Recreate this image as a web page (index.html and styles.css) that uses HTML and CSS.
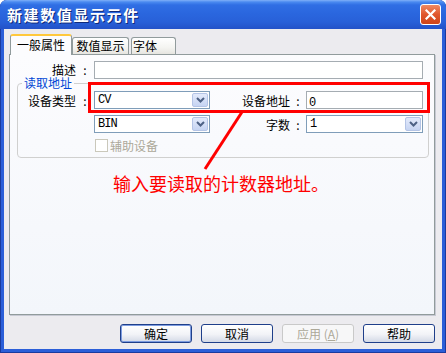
FILE: index.html
```html
<!DOCTYPE html>
<html lang="zh-CN">
<head>
  <meta charset="UTF-8" />
  <title>新建数值显示元件</title>
  <link rel="stylesheet" href="styles.css">
</head>
<body>

  <div class="window">

    <!-- Title bar -->
    <div class="titlebar">
      <span class="title">新建数值显示元件</span>
      <span class="close-btn">
        <svg width="11" height="11" viewBox="0 0 11 11">
          <path d="M1.5 1.5 L9.5 9.5 M9.5 1.5 L1.5 9.5" stroke="#fff" stroke-width="2.2" stroke-linecap="square"/>
        </svg>
      </span>
    </div>

    <div class="client">

      <!-- Tabs -->
      <div class="tabs">
        <span class="tab active">一般属性</span>
        <span class="tab tab-value">数值显示</span>
        <span class="tab tab-font">字体</span>
      </div>

      <div class="panel">
        <div class="field">
          <span class="lbl">描述</span>
          <span class="colon">:</span>
          <div class="edit"></div>
        </div>

        <fieldset class="group">
          <legend>读取地址</legend>
          <div class="grid">
            <span class="lbl">设备类型</span>
            <span class="colon">:</span>
            <div class="combo">
              <span class="val">CV</span>
              <span class="drop"><svg width="9" height="6" viewBox="0 0 9 6"><path d="M1 1 L4.5 4.5 L8 1" fill="none" stroke="#4d6185" stroke-width="2"/></svg></span>
            </div>
            <span class="lbl">设备地址</span>
            <span class="colon">:</span>
            <div class="edit"><span class="val">0</span></div>

            <span></span>
            <span></span>
            <div class="combo">
              <span class="val">BIN</span>
              <span class="drop"><svg width="9" height="6" viewBox="0 0 9 6"><path d="M1 1 L4.5 4.5 L8 1" fill="none" stroke="#4d6185" stroke-width="2"/></svg></span>
            </div>
            <span class="lbl">字数</span>
            <span class="colon">:</span>
            <div class="combo">
              <span class="val">1</span>
              <span class="drop"><svg width="9" height="6" viewBox="0 0 9 6"><path d="M1 1 L4.5 4.5 L8 1" fill="none" stroke="#4d6185" stroke-width="2"/></svg></span>
            </div>

            <span></span>
            <span></span>
            <label class="check"><span class="box"></span>辅助设备</label>
          </div>
        </fieldset>

        <p class="note">输入要读取的计数器地址。</p>

        <!-- annotation -->
        <div class="mark"></div>
        <svg class="pointer" width="424" height="259">
          <line x1="232" y1="57" x2="195" y2="114" stroke="#f00" stroke-width="3"/>
        </svg>
      </div>

      <!-- Buttons -->
      <div class="buttons">
        <span class="btn default">确定</span>
        <span class="btn">取消</span>
        <span class="btn disabled">应用 (<u>A</u>)</span>
        <span class="btn">帮助</span>
      </div>
    </div>
  </div>

</body>
</html>
```

FILE: styles.css
```css
* {
  box-sizing: border-box;
}

body {
  margin: 0;
  background: #fff;
  font-family: "Noto Sans CJK SC", "Noto Sans", sans-serif;
  font-size: 12px;
  color: #000;
}

.window {
  width: 446px;
  height: 353px;
  display: flex;
  flex-direction: column;
  background: #2b5ed8;
  border-radius: 7px 7px 0 0;
  overflow: hidden;
  box-shadow: inset 1px 0 #1a3a9e, inset -1px 0 #1a3a9e, inset 0 -1px #1a3a9e;
}

.titlebar {
  height: 29px;
  flex: none;
  display: flex;
  align-items: center;
  justify-content: space-between;
  padding: 0 5px 0 7px;
  background: linear-gradient(#80b0f8 0, #4a8af0 2px, #2f6ee4 5px, #2a66de 14px, #2860d8 22px, #2352c8 29px);
}

.title {
  color: #fff;
  font-weight: bold;
  font-size: 15px;
  letter-spacing: 1.6px;
  text-shadow: 1px 1px #0f2a7a;
}

.close-btn {
  width: 21px;
  height: 21px;
  border: 1px solid #fff;
  border-radius: 3px;
  background: linear-gradient(#f08a64, #e0562c 50%, #cf4418);
  display: flex;
  align-items: center;
  justify-content: center;
}

.client {
  flex: 1;
  margin: 0 4px 4px;
  background: #ecebef;
  padding: 5px 7px 6px 5px;
  display: flex;
  flex-direction: column;
}

/* tabs */
.tabs {
  display: flex;
  align-items: flex-end;
  height: 20px;
  padding-left: 1px;
}

.tab {
  height: 17px;
  border: 1px solid #919b9c;
  border-bottom: none;
  border-radius: 3px 3px 0 0;
  background: linear-gradient(#fff, #f4f4f1 60%, #e6e5e0);
  text-align: center;
  line-height: 16px;
}

.tab.active {
  width: 62px;
  height: 21px;
  margin-bottom: -1px;
  border-top: 2px solid #ffc83c;
  background: #fcfcfe;
  line-height: 18px;
  position: relative;
  z-index: 1;
}

.tab-value {
  width: 57px;
}

.tab-font {
  width: 45px;
  margin-left: 2px;
  text-align: left;
  padding-left: 1px;
}

.panel {
  position: relative;
  flex: none;
  height: 261px;
  border: 1px solid #919b9c;
  background: linear-gradient(#fcfcfe, #f3f6fb);
  padding-top: 6px;
  box-shadow: 1px 1px 0 #c7c9d3;
}

.field {
  display: flex;
  align-items: center;
  height: 18px;
  margin-right: 11px;
}

.field .lbl {
  width: 66px;
  line-height: 14px;
}

.lbl {
  text-align: right;
}

.colon {
  text-align: center;
}

.field .colon {
  width: 18px;
  line-height: 14px;
}

.edit {
  flex: 1;
  height: 18px;
  border: 1px solid #a5acb2;
  background: #fff;
}

.val {
  font-family: "Liberation Mono", monospace;
  font-size: 12px;
  letter-spacing: -1px;
  line-height: 16px;
  padding-left: 2px;
}

/* group box */
.group {
  margin: -2px 5px 0 7px;
  padding: 2px 0 5px 0;
  border: 1px solid #d0d0cf;
  border-radius: 4px;
  min-width: 0;
}

.group legend {
  margin-left: 4px;
  padding: 0 2px;
  color: #0046d5;
  line-height: 12px;
}

.grid {
  display: grid;
  grid-template-columns: 58px 18px 116px 80px 16px 117px;
  grid-template-rows: 18px 18px 13px;
  row-gap: 6px;
  align-items: center;
}

.grid .edit {
  height: 18px;
}

.combo {
  display: flex;
  height: 18px;
  border: 1px solid #7f9db9;
  background: #fff;
}

.combo .val {
  flex: 1;
  padding-left: 3px;
}

.drop {
  width: 16px;
  margin: 1px;
  border: 1px solid #b4c4e6;
  border-radius: 2px;
  background: linear-gradient(#e3eafb, #c6d4f2);
  display: flex;
  align-items: center;
  justify-content: center;
}

.check {
  grid-column: 3 / 5;
  display: flex;
  align-items: center;
  gap: 2px;
  padding-left: 1px;
  color: #aca899;
  line-height: 13px;
}

.check .box {
  width: 13px;
  height: 13px;
  border: 1px solid #cac8bb;
  background: #fff;
}

.note {
  margin: 15px 0 0 103px;
  color: #f00;
  font-size: 18px;
  line-height: 20px;
}

.mark {
  position: absolute;
  left: 78px;
  top: 27px;
  width: 342px;
  height: 31px;
  border: 3px solid #f00;
}

.pointer {
  position: absolute;
  left: 0;
  top: 0;
}

/* buttons */
.buttons {
  display: flex;
  justify-content: flex-end;
  gap: 9px;
  margin-top: 9px;
}

.btn {
  width: 72px;
  height: 19px;
  border: 1px solid #1f3f8a;
  border-radius: 3px;
  background: linear-gradient(#fff, #f2f3f7 55%, #d3d9e6);
  text-align: center;
  line-height: 17px;
}

.btn.default {
  box-shadow: inset 0 0 0 1px #7c9be0;
}

.btn.disabled {
  border-color: #c9c9c9;
  background: #f7f7f8;
  color: #aca899;
}

.btn u {
  text-decoration: underline;
}
```
